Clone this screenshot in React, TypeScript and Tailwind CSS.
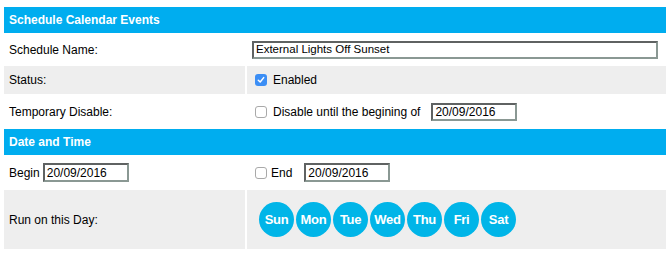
import React from "react";

const font = { fontFamily: '"Liberation Sans", Arial, Helvetica, sans-serif' };

function CheckBox({ checked }: { checked?: boolean }) {
  if (checked) {
    return (
      <span className="inline-flex w-[12px] h-[12px] rounded-[3px] bg-[#3b8ef5] items-center justify-center shrink-0">
        <svg width="8" height="8" viewBox="0 0 8 8">
          <path d="M1.3 4.2 L3.2 6 L6.7 1.6" fill="none" stroke="#fff" strokeWidth="1.5" strokeLinecap="round" strokeLinejoin="round" />
        </svg>
      </span>
    );
  }
  return <span className="inline-block w-[12px] h-[12px] rounded-[3px] border border-[#a9a9a9] bg-white shrink-0" />;
}

function TextBox({ value, w, h, size }: { value: string; w: string; h: string; size: string }) {
  return (
    <div
      className={`${w} ${h} ${size} flex items-center pl-[2px] bg-white border-2 border-t-[#5f6262] border-l-[#5f6262] border-b-[#8a9893] border-r-[#8a9893] text-black leading-none whitespace-nowrap overflow-hidden`}
    >
      {value}
    </div>
  );
}

const days = ["Sun", "Mon", "Tue", "Wed", "Thu", "Fri", "Sat"];

export default function App() {
  return (
    <div className="w-[666px] h-[253px] bg-white pt-[7px] pl-[4px] text-[12px] text-black" style={font}>
      <div className="flex flex-col">
        <div className="h-[26px] bg-[#00adef] flex items-center pl-[5px] text-white font-bold text-[12px]">
          Schedule Calendar Events
        </div>

        <div className="h-[33px] flex gap-[2px]">
          <div className="w-[241px] flex items-center pl-[5px]">Schedule Name:</div>
          <div className="flex-1 flex items-center pl-[5px]">
            <TextBox value="External Lights Off Sunset" w="w-[406px]" h="h-[18px]" size="text-[11.5px]" />
          </div>
        </div>

        <div className="h-[28px] flex gap-[2px]">
          <div className="w-[241px] bg-[#eeeeee] flex items-center pl-[5px]">Status:</div>
          <div className="flex-1 bg-[#eeeeee] flex items-center pl-[8px]">
            <CheckBox checked />
            <span className="ml-[6px]">Enabled</span>
          </div>
        </div>

        <div className="h-[35px] flex gap-[2px]">
          <div className="w-[241px] flex items-center pl-[5px]">Temporary Disable:</div>
          <div className="flex-1 flex items-center pl-[8px]">
            <CheckBox />
            <span className="ml-[6px]">Disable until the begining of</span>
            <div className="ml-[11px]">
              <TextBox value="20/09/2016" w="w-[86px]" h="h-[18px]" size="text-[12px]" />
            </div>
          </div>
        </div>

        <div className="h-[26px] bg-[#00adef] flex items-center pl-[5px] text-white font-bold text-[12px]">
          Date and Time
        </div>

        <div className="h-[35px] flex gap-[2px]">
          <div className="w-[241px] flex items-center pl-[5px]">
            <span>Begin</span>
            <div className="ml-[3px]">
              <TextBox value="20/09/2016" w="w-[86px]" h="h-[19px]" size="text-[12px]" />
            </div>
          </div>
          <div className="flex-1 flex items-center pl-[8px]">
            <CheckBox />
            <span className="ml-[4px]">End</span>
            <div className="ml-[12px]">
              <TextBox value="20/09/2016" w="w-[86px]" h="h-[19px]" size="text-[12px]" />
            </div>
          </div>
        </div>

        <div className="h-[59px] flex gap-[2px]">
          <div className="w-[241px] bg-[#eeeeee] flex items-center pl-[5px]">Run on this Day:</div>
          <div className="flex-1 bg-[#eeeeee] flex items-center pl-[12px] gap-[2px]">
            {days.map((d) => (
              <div
                key={d}
                className="w-[35px] h-[35px] rounded-full bg-[#00b5e8] flex items-center justify-center text-white font-bold text-[13px] tracking-[-0.3px]"
              >
                {d}
              </div>
            ))}
          </div>
        </div>
      </div>
    </div>
  );
}
